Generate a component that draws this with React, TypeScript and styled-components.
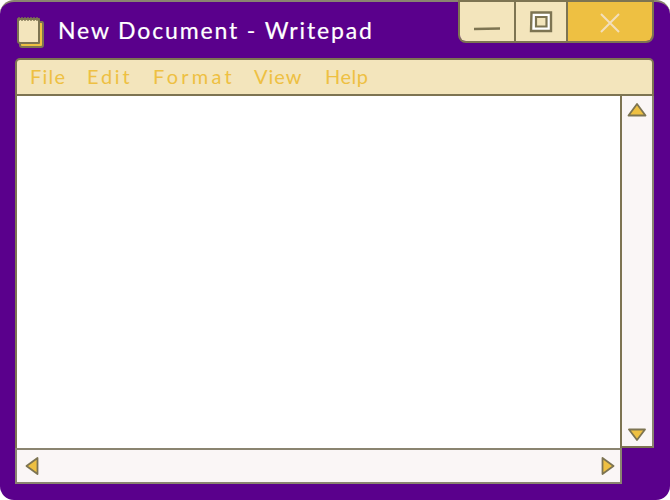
import React from "react";
import styled, { createGlobalStyle } from "styled-components";

const line = "#7d7452";
const cream = "#f3e5bc";
const gold = "#eec042";

const Global = createGlobalStyle`
  html, body { margin: 0; padding: 0; background: #fff; }
  #root { width: 670px; height: 500px; overflow: hidden; }
`;

const Win = styled.div`
  box-sizing: border-box;
  width: 670px;
  height: 500px;
  background: #5a008c;
  border-top: 2px solid #8a8470;
  border-radius: 14px;
  padding: 0 16px 16px 15px;
  display: flex;
  flex-direction: column;
`;

const TitleBar = styled.div`
  display: flex;
  height: 56px;
  flex: none;
`;

const TitleLeft = styled.div`
  display: flex;
  align-items: flex-start;
  flex: 1;
  padding: 14px 0 0 1px;
  gap: 14px;
`;

const Title = styled.div`
  font-family: "Lato", sans-serif;
  font-size: 23px;
  line-height: 28px;
  letter-spacing: 1.85px;
  color: #fff;
  white-space: nowrap;
  -webkit-text-stroke: 0.2px #fff;
`;

const Controls = styled.div`
  display: flex;
  flex: none;
  height: 43px;
  box-sizing: border-box;
  border: 2px solid ${line};
  border-radius: 0 0 8px 8px;
  overflow: hidden;
  margin-top: -2px;
`;

const Ctl = styled.div<{ $w: number; $bg: string }>`
  box-sizing: border-box;
  flex: none;
  width: ${(p) => p.$w}px;
  background: ${(p) => p.$bg};
  display: flex;
  align-items: center;
  justify-content: center;
  & + & { border-left: 2px solid ${line}; }
`;

const Menu = styled.div`
  box-sizing: border-box;
  height: 38px;
  flex: none;
  display: flex;
  align-items: center;
  padding: 0 0 3px 13px;
  background: ${cream};
  border: 2px solid ${line};
  border-radius: 5px 5px 0 0;
`;

const MenuItem = styled.span<{ $w: number; $ls: number }>`
  width: ${(p) => p.$w}px;
  font-family: "Lato", sans-serif;
  font-size: 20px;
  letter-spacing: ${(p) => p.$ls}px;
  color: ${gold};
`;

const Body = styled.div`
  flex: 1;
  display: grid;
  grid-template-columns: 607px 32px;
  grid-template-rows: 352px 36px;
`;

const Editor = styled.div`
  background: #fff;
  border-left: 2px solid ${line};
  border-right: 2px solid ${line};
`;

const VBar = styled.div`
  box-sizing: border-box;
  background: #faf6f6;
  border-right: 2px solid #8a8470;
  border-bottom: 2px solid ${line};
  display: flex;
  flex-direction: column;
  justify-content: space-between;
  align-items: center;
  padding: 7px 0 5px;
`;

const HBar = styled.div`
  box-sizing: border-box;
  background: #faf6f6;
  border: 2px solid #8a8470;
  display: flex;
  align-items: center;
  justify-content: space-between;
  padding: 0 5px 0 8px;
`;

const Arrow = ({ d, w, h }: { d: string; w: number; h: number }) => (
  <svg width={w} height={h} viewBox={`0 0 ${w} ${h}`}>
    <path d={d} fill={gold} stroke={line} strokeWidth="1.8" strokeLinejoin="round" />
  </svg>
);

const Notepad = () => (
  <svg width="28" height="34" viewBox="0 0 28 34" style={{ flex: "none" }}>
    <path d="M5 6 H26 Q27 6 27 8 V29 Q27 31 25 31 H6 Q4 31 4 29 Z" fill={gold} stroke={line} strokeWidth="2" />
    <path d="M2 3 H23 V27 H4 Q2 27 2 25 Z" fill={cream} stroke={line} strokeWidth="2" strokeLinejoin="round" />
    <path d="M3 1 V5 M6 1 V5 M9 1 V5 M12 1 V5 M15 1 V5 M18 1 V5 M21 1 V5" stroke={line} strokeWidth="1.4" />
  </svg>
);

export default function App() {
  return (
    <>
      <Global />
      <Win>
        <TitleBar>
          <TitleLeft>
            <Notepad />
            <Title>New Document - Writepad</Title>
          </TitleLeft>
          <Controls>
            <Ctl $w={54} $bg={cream}>
              <svg width="28" height="16" viewBox="0 0 28 16" style={{ marginTop: 12 }}>
                <path d="M1 9 L27 8.5" stroke={line} strokeWidth="2.4" />
              </svg>
            </Ctl>
            <Ctl $w={52} $bg={cream}>
              <svg width="24" height="22" viewBox="0 0 24 22">
                <path d="M2.5 1.5 H22 V20 H2 Z" fill="#fff" stroke={line} strokeWidth="2.4" />
                <path d="M7 6 H17.5 V15.5 H7 Z" fill={cream} stroke={line} strokeWidth="2.2" />
              </svg>
            </Ctl>
            <Ctl $w={86} $bg={gold}>
              <svg width="22" height="22" viewBox="0 0 22 22" style={{ marginTop: 2 }}>
                <path d="M2 2 L20 20 M20 2 L2 20" stroke="#f3dfbc" strokeWidth="2" />
              </svg>
            </Ctl>
          </Controls>
        </TitleBar>
        <Menu>
          <MenuItem $w={57} $ls={1.25}>File</MenuItem>
          <MenuItem $w={66} $ls={2.75}>Edit</MenuItem>
          <MenuItem $w={101} $ls={3.25}>Format</MenuItem>
          <MenuItem $w={71} $ls={1}>View</MenuItem>
          <MenuItem $w={50} $ls={0.5}>Help</MenuItem>
        </Menu>
        <Body>
          <Editor />
          <VBar>
            <Arrow w={20} h={14} d="M10 1 L18.5 12.5 H1.5 Z" />
            <Arrow w={20} h={13} d="M2 1.5 H18 L10 12 Z" />
          </VBar>
          <HBar>
            <Arrow w={14} h={18} d="M12.5 1 V17 L1.5 9 Z" />
            <Arrow w={14} h={18} d="M1.5 1 L12.5 9 L1.5 17 Z" />
          </HBar>
        </Body>
      </Win>
    </>
  );
}
